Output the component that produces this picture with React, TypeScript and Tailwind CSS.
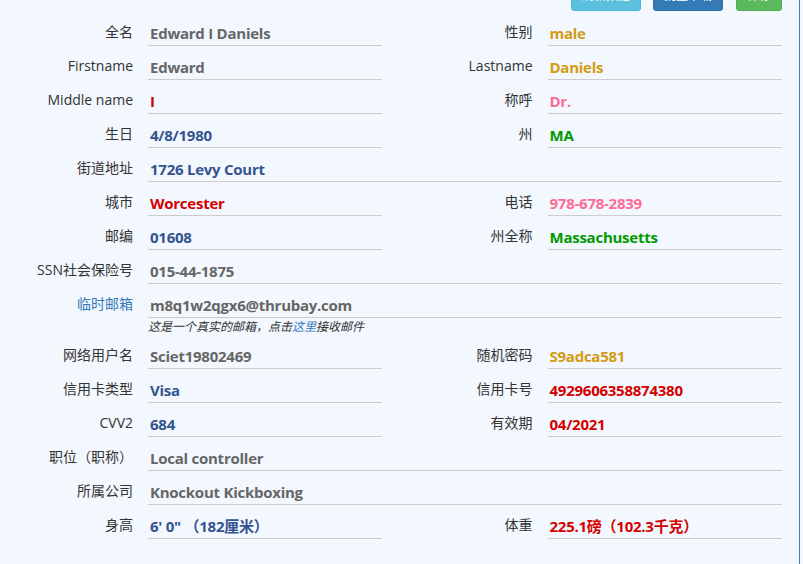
import React from "react";

type C = { label: string; value: string; color: string; labelColor?: string };

const GRAY = "text-[#666666]";
const GOLD = "text-[#d49a12]";
const RED = "text-[#d40000]";
const PINK = "text-[#ff6b95]";
const GREEN = "text-[#009a00]";
const BLUE = "text-[#34538f]";

const font = { fontFamily: '"Open Sans", "Noto Sans CJK SC", sans-serif' };

function Label({ c }: { c: C }) {
  return (
    <div
      className={`w-[133px] shrink-0 text-right text-[14px] leading-[20px] pt-[10px] ${c.labelColor ?? "text-[#333333]"}`}
    >
      {c.label}
    </div>
  );
}

function Value({ c, w }: { c: C; w: string }) {
  return (
    <div className={`ml-[15px] ${w} h-[34px] border-b border-[#cccccc] pl-[2px] pt-[11px] text-[15px] leading-[20px] font-bold tracking-[-0.25px] whitespace-nowrap ${c.color}`}>
      {c.value}
    </div>
  );
}

function Half({ c }: { c: C }) {
  return (
    <div className="flex w-[400px]">
      <Label c={c} />
      <Value c={c} w="w-[234px]" />
    </div>
  );
}

function Row({ a, b }: { a: C; b?: C }) {
  return (
    <div className="flex h-[34px]">
      <Half c={a} />
      {b && <Half c={b} />}
    </div>
  );
}

function Full({ c, children }: { c: C; children?: React.ReactNode }) {
  return (
    <div>
      <div className="flex h-[34px]">
        <Label c={c} />
        <Value c={c} w="w-[634px]" />
      </div>
      {children}
    </div>
  );
}

export default function App() {
  return (
    <div className="h-[564px] w-[803px] bg-[#f2f8fe] overflow-hidden" style={font}>
      <div className="w-[800px] h-[564px] flex flex-col border-r border-[#3d7fc1]">
        <div className="flex justify-end gap-[12px] pr-[17px] mt-[-19px] h-[30px] shrink-0">
          <button className="h-[30px] px-[10px] text-[12px] leading-[18px] text-white bg-[#5bc0de] border border-[#46b8da] rounded-[3px]">
            刷新数据
          </button>
          <button className="h-[30px] px-[10px] text-[12px] leading-[18px] text-white bg-[#337ab7] border border-[#2e6da4] rounded-[3px] mr-[1px]">
            批量下载
          </button>
          <button className="h-[30px] px-[10px] text-[12px] leading-[18px] text-white bg-[#5cb85c] border border-[#4cae4c] rounded-[3px]">
            保存
          </button>
        </div>
        <div className="mt-[1px]">
          <Row a={{ label: "全名", value: "Edward I Daniels", color: GRAY }} b={{ label: "性别", value: "male", color: GOLD }} />
          <Row a={{ label: "Firstname", value: "Edward", color: GRAY }} b={{ label: "Lastname", value: "Daniels", color: GOLD }} />
          <Row a={{ label: "Middle name", value: "I", color: RED }} b={{ label: "称呼", value: "Dr.", color: PINK }} />
          <Row a={{ label: "生日", value: "4/8/1980", color: BLUE }} b={{ label: "州", value: "MA", color: GREEN }} />
          <Full c={{ label: "街道地址", value: "1726 Levy Court", color: BLUE }} />
          <Row a={{ label: "城市", value: "Worcester", color: RED }} b={{ label: "电话", value: "978-678-2839", color: PINK }} />
          <Row a={{ label: "邮编", value: "01608", color: BLUE }} b={{ label: "州全称", value: "Massachusetts", color: GREEN }} />
          <Full c={{ label: "SSN社会保险号", value: "015-44-1875", color: GRAY }} />
          <Full c={{ label: "临时邮箱", value: "m8q1w2qgx6@thrubay.com", color: GRAY, labelColor: "text-[#337ab7]" }}>
            <div className="h-[17px] pl-[148px] pt-[1px] text-[12px] leading-[16px] italic text-[#333333]">
              这是一个真实的邮箱，点击<span className="text-[#337ab7]">这里</span>接收邮件
            </div>
          </Full>
          <Row a={{ label: "网络用户名", value: "Sciet19802469", color: GRAY }} b={{ label: "随机密码", value: "S9adca581", color: GOLD }} />
          <Row a={{ label: "信用卡类型", value: "Visa", color: BLUE }} b={{ label: "信用卡号", value: "4929606358874380", color: RED }} />
          <Row a={{ label: "CVV2", value: "684", color: BLUE }} b={{ label: "有效期", value: "04/2021", color: RED }} />
          <Full c={{ label: "职位（职称）", value: "Local controller", color: GRAY }} />
          <Full c={{ label: "所属公司", value: "Knockout Kickboxing", color: GRAY }} />
          <Row a={{ label: "身高", value: "6' 0\" （182厘米）", color: BLUE }} b={{ label: "体重", value: "225.1磅（102.3千克）", color: RED }} />
        </div>
      </div>
    </div>
  );
}
